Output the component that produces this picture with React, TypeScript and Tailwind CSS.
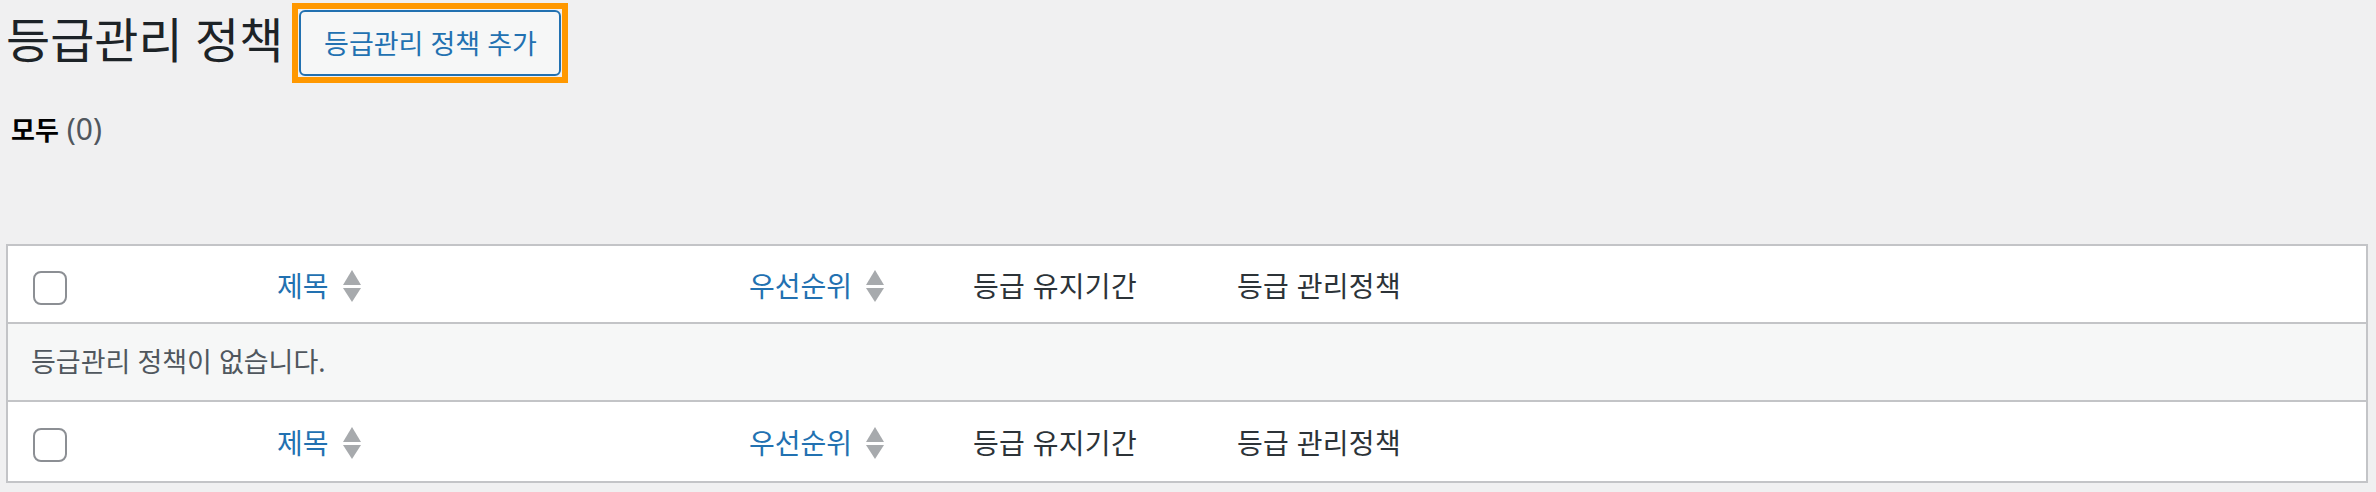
import React from 'react'

const columns = [
  { key: 'title', label: '제목', sortable: true },
  { key: 'priority', label: '우선순위', sortable: true },
  { key: 'period', label: '등급 유지기간', sortable: false },
  { key: 'policy', label: '등급 관리정책', sortable: false },
]

function SortIcon() {
  return (
    <svg width="18" height="32" viewBox="0 0 18 32" className="ml-[14px] shrink-0" aria-hidden="true">
      <polygon points="9,0 18,15 0,15" fill="#a7aaad" />
      <polygon points="0,18 18,18 9,32" fill="#a7aaad" />
    </svg>
  )
}

function CheckBox() {
  return <span className="block w-[34px] h-[34px] rounded-[8px] border-2 border-[#8c8f94] bg-white mt-[7px]" />
}

function HeadRow({ last }: { last?: boolean }) {
  return (
    <div
      className={
        'grid grid-cols-[249px_472px_224px_264px_1fr] items-center ' +
        (last ? 'h-[79px]' : 'h-[78px] border-b-2 border-[#c3c4c7]')
      }
    >
      <div className="pl-[25px] flex items-center">
        <CheckBox />
      </div>
      {columns.map((col) => (
        <div key={col.key} className="pl-[20px] flex items-center mt-[3px]">
          {col.sortable ? (
            <>
              <span className="text-[28px] leading-[40px] text-[#2271b1]">{col.label}</span>
              <SortIcon />
            </>
          ) : (
            <span className="text-[28px] leading-[40px] tracking-[0.3px] text-[#2c3338]">{col.label}</span>
          )}
        </div>
      ))}
    </div>
  )
}

export default function App() {
  return (
    <div className="min-h-screen bg-[#f0f0f1] pl-[6px] pr-[8px] font-['Noto_Sans','Noto_Sans_CJK_KR',sans-serif]">
      <div className="flex items-start pt-[10px]">
        <h1 className="text-[48px] leading-[60px] text-[#1d2327] font-normal">등급관리 정책</h1>
        <div className="ml-[9px] -mt-[7px] border-[6px] border-[#ff9800] p-[1px]">
          <button className="w-[262px] h-[66px] flex items-center justify-center rounded-[6px] border-2 border-[#2271b1] bg-[#f6f7f7] text-[#2271b1] text-[27px] leading-none">
            등급관리 정책 추가
          </button>
        </div>
      </div>

      <div className="mt-[26px] pl-[5px] text-[26px] leading-[40px] flex items-baseline">
        <span className="font-semibold text-black">모두</span>
        <span className="ml-[8px] text-[30px] text-[#50575e]">(0)</span>
      </div>

      <div className="mt-[94px] border-2 border-[#c3c4c7] bg-white">
        <HeadRow />
        <div className="h-[78px] flex items-center bg-[#f6f7f7] border-b-2 border-[#c3c4c7] pl-[23px]">
          <span className="text-[27px] leading-[40px] text-[#50575e]">등급관리 정책이 없습니다.</span>
        </div>
        <HeadRow last />
      </div>
    </div>
  )
}
